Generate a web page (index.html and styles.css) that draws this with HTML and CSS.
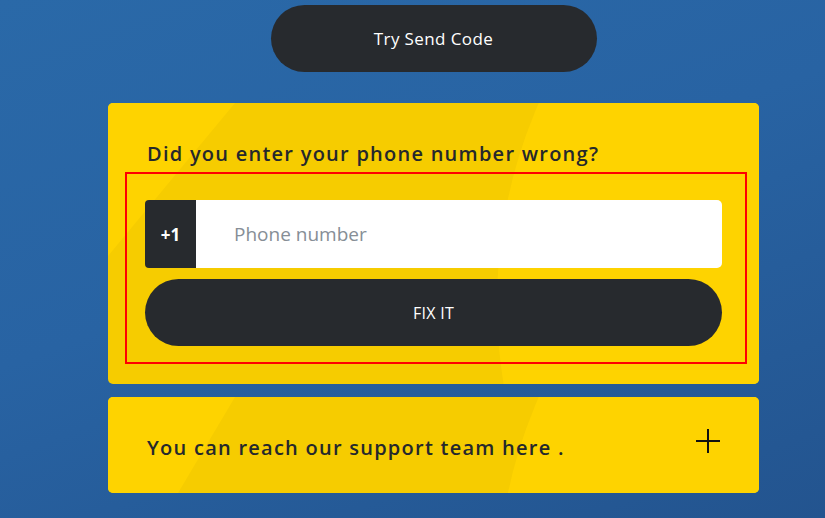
FILE: index.html
```html
<!DOCTYPE html>
<html lang="en">
<head>
<meta charset="utf-8">
<title>Fix phone number</title>
<link rel="stylesheet" href="styles.css">
</head>
<body>
<main class="page">
  <button class="btn-pill btn-top" type="button">Try Send Code</button>

  <section class="card card-form">
    <h2 class="card-title">Did you enter your phone number wrong?</h2>
    <form class="fix-form">
      <div class="phone-row">
        <span class="prefix">+1</span>
        <input class="phone-input" type="text" placeholder="Phone number">
      </div>
      <button class="btn-pill btn-fix" type="button">FIX IT</button>
    </form>
  </section>

  <section class="card card-support">
    <p class="support-text">You can reach our support team here .</p>
    <svg class="plus" width="26" height="26" viewBox="0 0 26 26" aria-hidden="true">
      <path d="M13 1V25M1 13H25" stroke="#111" stroke-width="2" fill="none"/>
    </svg>
  </section>
</main>
</body>
</html>
```

FILE: styles.css
```css
* { box-sizing: border-box; }

html, body {
  margin: 0;
  height: 100%;
}

body {
  background: linear-gradient(160deg, #2a69a8 0%, #2863a3 45%, #23548f 100%);
  font-family: "Open Sans", "Noto Sans", sans-serif;
  color: #23272b;
  overflow: hidden;
}

.page {
  width: 651px;
  margin-left: 108px;
  padding-top: 5px;
  display: flex;
  flex-direction: column;
  align-items: center;
}

.btn-pill {
  border: 0;
  background: #272a2e;
  color: #fff;
  border-radius: 40px;
  font-family: "Open Sans", "Noto Sans", sans-serif;
  cursor: pointer;
}

.btn-top {
  width: 326px;
  height: 67px;
  font-size: 17px;
  font-weight: 500;
  letter-spacing: 0.4px;
}

.card {
  position: relative;
  width: 651px;
  border-radius: 5px;
  background: #f6cc00;
  overflow: hidden;
}

/* light area on the right, bounded by a large arc */
.card::before {
  content: "";
  position: absolute;
  left: 389px;
  top: -300px;
  width: 1000px;
  height: 1000px;
  border-radius: 50%;
  background: #fed300;
  z-index: 0;
}

/* light wedge on the left, bounded by a diagonal */
.card::after {
  content: "";
  position: absolute;
  inset: 0;
  background: #fed300;
  z-index: 0;
}

.card-form::after {
  clip-path: polygon(0 0, 127px 0, 0 153px);
}

.card-support::after {
  clip-path: polygon(0 0, 127px 0, 70px 100%, 0 100%);
}

.card > * { position: relative; z-index: 1; }

.card-form {
  margin-top: 31px;
  padding: 39px 12px 20px 17px;
}

.card-title {
  margin: 0 0 6px 22px;
  font-size: 20px;
  line-height: 24px;
  font-weight: 600;
  color: #25282c;
  letter-spacing: 1.25px;
  white-space: nowrap;
}

.fix-form {
  border: 2px solid #ff0000;
  padding: 26px 23px 16px 18px;
  display: flex;
  flex-direction: column;
  gap: 11px;
}

.phone-row {
  display: flex;
  height: 68px;
}

.prefix {
  width: 51px;
  background: #272a2e;
  color: #fff;
  border-radius: 4px 0 0 4px;
  display: flex;
  align-items: center;
  justify-content: center;
  font-weight: 700;
  font-size: 17px;
}

.phone-input {
  flex: 1;
  border: 0;
  border-radius: 0 5px 5px 0;
  background: #fff;
  padding: 0 0 0 38px;
  font-family: "Open Sans", "Noto Sans", sans-serif;
  font-size: 19px;
  color: #333;
  outline: none;
}

.phone-input::placeholder {
  color: #868e96;
}

.btn-fix {
  height: 67px;
  font-size: 16px;
  font-weight: 500;
  letter-spacing: 0.3px;
}

.card-support {
  margin-top: 13px;
  height: 96px;
  display: flex;
  align-items: center;
  justify-content: space-between;
  padding: 0 38px 0 39px;
}

.support-text {
  margin: 4px 0 0;
  font-size: 20px;
  font-weight: 600;
  color: #25282c;
  letter-spacing: 1.25px;
}

.plus {
  margin-top: -8px;
}
```
